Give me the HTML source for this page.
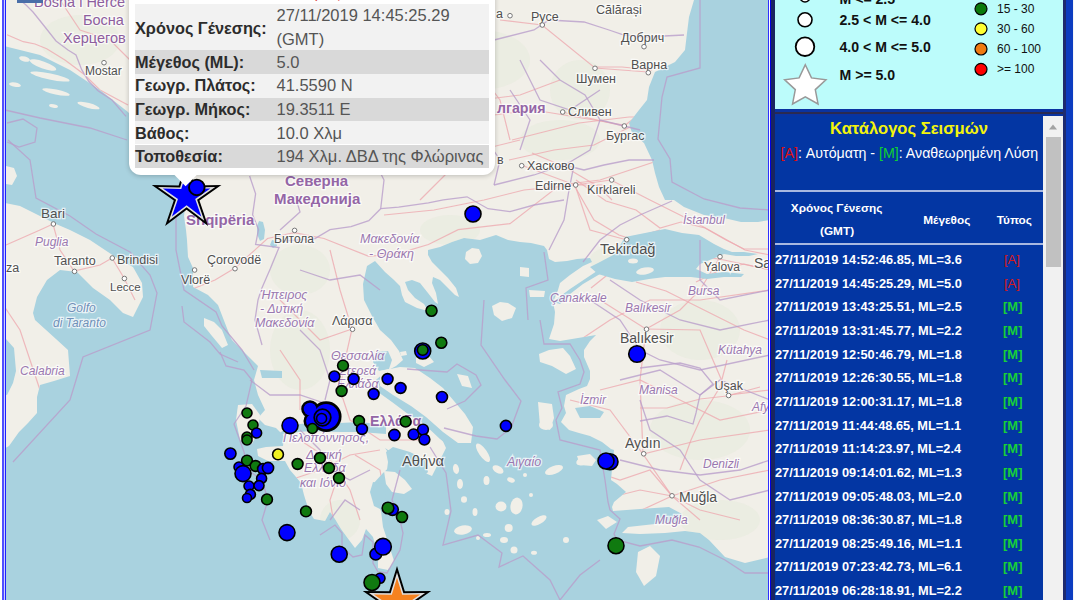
<!DOCTYPE html>
<html><head><meta charset="utf-8">
<style>
html,body{margin:0;padding:0;width:1074px;height:600px;overflow:hidden;background:#fff;font-family:"Liberation Sans",sans-serif;}
.abs{position:absolute;}
.pl{left:135px;font-weight:bold;font-size:16.3px;color:#2c2c2c;white-space:nowrap;line-height:20px}
.pv{left:276.5px;font-size:16.5px;color:#555;white-space:nowrap;line-height:20px}
.lg{font-weight:bold;font-size:14.1px;color:#111;white-space:nowrap;line-height:16px}
.lr{font-size:12px;color:#111;white-space:nowrap;line-height:14px}
.th{font-weight:bold;font-size:11.8px;white-space:nowrap;line-height:14px}
.row{position:absolute;left:0;font-weight:bold;font-size:12.8px;white-space:nowrap;line-height:16px}
.ty{position:absolute;font-size:13px;white-space:nowrap;line-height:16px}
#map{position:absolute;left:0;top:0;width:770px;height:600px;overflow:hidden;}
</style></head><body>
<div id="map">
<svg width="770" height="600" viewBox="0 0 770 600" style="position:absolute;left:0;top:0">
<defs><clipPath id="landclip"><path d="M0,0 L694,0 L689,17 L687,33 L685,50 L675,62 L655,72 L649,87 L647,100 L639,110 L629,123 L632,133 L644,143 L652,160 L655,173 L659,187 L665,200 L674,200 L684,207 L704,215 L724,218 L741,222 L758,222 L770,220 L770,557 L745,563 L725,557 L709,540 L700,533 L685,531 L665,533 L640,534 L622,533 L628,527 L655,524 L678,522 L682,514 L669,507 L640,509 L613,511 L612,507 L614,502 L626,492 L617,484 L611,480 L612,469 L614,450 L611,449 L602,442 L590,436 L579,433 L569,430 L561,422 L566,413 L564,406 L566,395 L579,389 L587,386 L590,379 L590,371 L584,357 L584,350 L590,341 L596,335 L578,338 L560,341 L549,339 L551,333 L554,324 L555,312 L553,302 L558,290 L560,283 L570,275 L583,266 L592,262 L590,258 L577,259 L567,261 L555,262 L549,259 L547,250 L544,246 L531,243 L520,242 L508,240 L496,235 L480,240 L464,238 L452,242 L440,247 L428,250 L428,255 L432,262 L440,270 L448,278 L456,288 L459,297 L455,295 L448,288 L440,280 L433,277 L432,283 L436,293 L438,304 L435,302 L428,293 L420,283 L412,280 L405,282 L408,290 L415,298 L424,304 L428,311 L417,308 L405,302 L402,295 L400,286 L394,280 L385,272 L375,261 L367,266 L363,284 L364,300 L372,316 L380,330 L391,340 L399,351 L403,360 L396,366 L385,372 L376,380 L382,390 L392,399 L408,410 L424,420 L440,435 L446,448 L440,460 L432,476 L418,470 L400,458 L385,448 L395,462 L383,473 L373,484 L375,497 L381,511 L383,527 L389,545 L394,561 L389,569 L383,564 L377,551 L373,537 L366,529 L362,540 L355,548 L349,540 L341,529 L335,519 L330,512 L325,521 L314,519 L309,511 L304,495 L301,483 L296,477 L290,470 L285,461 L280,461 L268,461 L258,456 L257,449 L266,447 L283,446 L284,436 L276,428 L265,425 L258,418 L265,410 L258,395 L254,380 L258,366 L244,352 L232,340 L230,336 L223,318 L218,305 L208,295 L193,287 L193,268 L188,257 L187,240 L186,230 L184,216 L186,200 L188,178 L175,165 L150,140 L128,112 L100,90 L70,70 L40,55 L0,45 Z"/><path d="M0,202 L20,206 L40,216 L56,224 L70,230 L90,240 L108,252 L120,260 L133,267 L142,283 L143,297 L133,317 L123,313 L110,300 L93,288 L77,272 L60,270 L47,280 L37,297 L33,313 L35,320 L56,339 L68,350 L70,376 L54,381 L40,385 L37,397 L37,413 L28,423 L19,432 L9,446 L0,451 L0,394 L7,395 L13,383 L16,371 L14,348 L6,339 L0,338 Z"/></clipPath></defs><rect x="0" y="0" width="770" height="600" fill="#a9d2df"/><path d="M0,0 L694,0 L689,17 L687,33 L685,50 L675,62 L655,72 L649,87 L647,100 L639,110 L629,123 L632,133 L644,143 L652,160 L655,173 L659,187 L665,200 L674,200 L684,207 L704,215 L724,218 L741,222 L758,222 L770,220 L770,557 L745,563 L725,557 L709,540 L700,533 L685,531 L665,533 L640,534 L622,533 L628,527 L655,524 L678,522 L682,514 L669,507 L640,509 L613,511 L612,507 L614,502 L626,492 L617,484 L611,480 L612,469 L614,450 L611,449 L602,442 L590,436 L579,433 L569,430 L561,422 L566,413 L564,406 L566,395 L579,389 L587,386 L590,379 L590,371 L584,357 L584,350 L590,341 L596,335 L578,338 L560,341 L549,339 L551,333 L554,324 L555,312 L553,302 L558,290 L560,283 L570,275 L583,266 L592,262 L590,258 L577,259 L567,261 L555,262 L549,259 L547,250 L544,246 L531,243 L520,242 L508,240 L496,235 L480,240 L464,238 L452,242 L440,247 L428,250 L428,255 L432,262 L440,270 L448,278 L456,288 L459,297 L455,295 L448,288 L440,280 L433,277 L432,283 L436,293 L438,304 L435,302 L428,293 L420,283 L412,280 L405,282 L408,290 L415,298 L424,304 L428,311 L417,308 L405,302 L402,295 L400,286 L394,280 L385,272 L375,261 L367,266 L363,284 L364,300 L372,316 L380,330 L391,340 L399,351 L403,360 L396,366 L385,372 L376,380 L382,390 L392,399 L408,410 L424,420 L440,435 L446,448 L440,460 L432,476 L418,470 L400,458 L385,448 L395,462 L383,473 L373,484 L375,497 L381,511 L383,527 L389,545 L394,561 L389,569 L383,564 L377,551 L373,537 L366,529 L362,540 L355,548 L349,540 L341,529 L335,519 L330,512 L325,521 L314,519 L309,511 L304,495 L301,483 L296,477 L290,470 L285,461 L280,461 L268,461 L258,456 L257,449 L266,447 L283,446 L284,436 L276,428 L265,425 L258,418 L265,410 L258,395 L254,380 L258,366 L244,352 L232,340 L230,336 L223,318 L218,305 L208,295 L193,287 L193,268 L188,257 L187,240 L186,230 L184,216 L186,200 L188,178 L175,165 L150,140 L128,112 L100,90 L70,70 L40,55 L0,45 Z" fill="#f1efe8" /><path d="M0,202 L20,206 L40,216 L56,224 L70,230 L90,240 L108,252 L120,260 L133,267 L142,283 L143,297 L133,317 L123,313 L110,300 L93,288 L77,272 L60,270 L47,280 L37,297 L33,313 L35,320 L56,339 L68,350 L70,376 L54,381 L40,385 L37,397 L37,413 L28,423 L19,432 L9,446 L0,451 L0,394 L7,395 L13,383 L16,371 L14,348 L6,339 L0,338 Z" fill="#f1efe8" /><g clip-path="url(#landclip)"><ellipse cx="80" cy="40" rx="40" ry="25" fill="#dde9cf" opacity="0.25"/><ellipse cx="230" cy="100" rx="30" ry="20" fill="#dde9cf" opacity="0.25"/><ellipse cx="330" cy="120" rx="40" ry="25" fill="#dde9cf" opacity="0.25"/><ellipse cx="480" cy="60" rx="50" ry="30" fill="#dde9cf" opacity="0.25"/><ellipse cx="560" cy="140" rx="40" ry="20" fill="#dde9cf" opacity="0.25"/><ellipse cx="700" cy="330" rx="40" ry="30" fill="#dde9cf" opacity="0.25"/><ellipse cx="700" cy="430" rx="50" ry="30" fill="#dde9cf" opacity="0.25"/><ellipse cx="620" cy="260" rx="30" ry="15" fill="#dde9cf" opacity="0.25"/><ellipse cx="300" cy="350" rx="30" ry="40" fill="#dde9cf" opacity="0.25"/><ellipse cx="340" cy="520" rx="20" ry="20" fill="#dde9cf" opacity="0.25"/><ellipse cx="450" cy="230" rx="30" ry="15" fill="#dde9cf" opacity="0.25"/><ellipse cx="720" cy="520" rx="40" ry="20" fill="#dde9cf" opacity="0.25"/><ellipse cx="300" cy="270" rx="30" ry="25" fill="#dde9cf" opacity="0.25"/><ellipse cx="580" cy="90" rx="30" ry="30" fill="#dde9cf" opacity="0.25"/><path d="M0,150 L40,175 L60,180 L90,200 L130,215" fill="none" stroke="#eeaab0" stroke-width="1.2" stroke-opacity="0.8"/><path d="M7,34.7 L23.3,41.7 L35,44 L46.7,48.7 L65.3,60.3 L84,74.3 L100,90 L128,105" fill="none" stroke="#eeaab0" stroke-width="1.2" stroke-opacity="0.8"/><path d="M6,245 L40,230 L53,224 L60,250 L74,271 L100,265 L112,258 L124,278 L135,300" fill="none" stroke="#eeaab0" stroke-width="1.2" stroke-opacity="0.8"/><path d="M190,290 L215,280 L235,268 L267.5,238.5 L294.3,232.6 L324,238.5 L368.8,256.4 L398.6,253.4 L428.4,244.5 L458.2,229.6 L510,223.6 L560,185 L600,180 L630,170 L660,160" fill="none" stroke="#eeaab0" stroke-width="1.2" stroke-opacity="0.8"/><path d="M330,250 L340,290 L352,329 L345,360 L340,390 L350,420 L380,440 L420,440" fill="none" stroke="#eeaab0" stroke-width="1.2" stroke-opacity="0.8"/><path d="M280,300 L300,320 L320,340 L352,329" fill="none" stroke="#eeaab0" stroke-width="1.2" stroke-opacity="0.8"/><path d="M300,440 L330,460 L350,490 L360,520" fill="none" stroke="#eeaab0" stroke-width="1.2" stroke-opacity="0.8"/><path d="M290,480 L320,470 L350,455 L380,450" fill="none" stroke="#eeaab0" stroke-width="1.2" stroke-opacity="0.8"/><path d="M500,20 L542,25 L595,68 L648,72" fill="none" stroke="#eeaab0" stroke-width="1.2" stroke-opacity="0.8"/><path d="M494,115 L534,110 L564,115 L624,125" fill="none" stroke="#eeaab0" stroke-width="1.2" stroke-opacity="0.8"/><path d="M509,160 L554,150 L594,145 L634,125" fill="none" stroke="#eeaab0" stroke-width="1.2" stroke-opacity="0.8"/><path d="M562,112 L624,126 L645,110" fill="none" stroke="#eeaab0" stroke-width="1.2" stroke-opacity="0.8"/><path d="M384,215 L434,210 L484,200 L524,190 L574,185 L604,185" fill="none" stroke="#eeaab0" stroke-width="1.2" stroke-opacity="0.8"/><path d="M521,165 L575,185 L611,180 L650,200 L700,225 L745,250 L770,255" fill="none" stroke="#eeaab0" stroke-width="1.2" stroke-opacity="0.8"/><path d="M574,185 L594,220 L619,235 L664,250 L724,260 L770,270" fill="none" stroke="#eeaab0" stroke-width="1.2" stroke-opacity="0.8"/><path d="M575,185 L590,230 L627,240 L660,230" fill="none" stroke="#eeaab0" stroke-width="1.2" stroke-opacity="0.8"/><path d="M600,300 L646,329 L640,380 L643,454 L672,496 L700,520" fill="none" stroke="#eeaab0" stroke-width="1.2" stroke-opacity="0.8"/><path d="M646,329 L700,330 L728,395 L770,390" fill="none" stroke="#eeaab0" stroke-width="1.2" stroke-opacity="0.8"/><path d="M720,257 L700,290 L680,310 L646,329" fill="none" stroke="#eeaab0" stroke-width="1.2" stroke-opacity="0.8"/><path d="M570,400 L610,410 L643,454 L700,440 L770,430" fill="none" stroke="#eeaab0" stroke-width="1.2" stroke-opacity="0.8"/><path d="M620,520 L672,496 L720,480 L770,470" fill="none" stroke="#eeaab0" stroke-width="1.2" stroke-opacity="0.8"/><path d="M580,340 L610,320 L650,300 L700,300 L770,290" fill="none" stroke="#eeaab0" stroke-width="1.2" stroke-opacity="0.8"/><path d="M600,390 L640,380 L680,400 L720,420 L770,410" fill="none" stroke="#eeaab0" stroke-width="1.2" stroke-opacity="0.8"/><path d="M440,0 L470,60 L500,100 L510,140" fill="none" stroke="#eeaab0" stroke-width="1.2" stroke-opacity="0.8"/><path d="M300,0 L320,60 L300,120" fill="none" stroke="#eeaab0" stroke-width="1.2" stroke-opacity="0.8"/><path d="M60,0 L80,30 L110,40 L130,60" fill="none" stroke="#eeaab0" stroke-width="1.2" stroke-opacity="0.8"/><path d="M0,300 L20,330 L30,360 L40,390" fill="none" stroke="#eeaab0" stroke-width="1.2" stroke-opacity="0.8"/><path d="M512,140 L579,123 L629,117 L655,117" fill="none" stroke="#eeaab0" stroke-width="1.2" stroke-opacity="0.8"/><path d="M595,67 L622,67 L652,70" fill="none" stroke="#eeaab0" stroke-width="1.2" stroke-opacity="0.8"/><path d="M532,153 L565,167 L599,187 L612,200" fill="none" stroke="#eeaab0" stroke-width="1.2" stroke-opacity="0.8"/><path d="M576,180 L606,201 L636,210 L660,228 L681,222 L705,228 L726,240 L744,249 L770,249" fill="none" stroke="#eeaab0" stroke-width="1.2" stroke-opacity="0.8"/><path d="M627,237 L621,255 L606,276 L591,288" fill="none" stroke="#eeaab0" stroke-width="1.2" stroke-opacity="0.8"/><path d="M696,282 L720,270 L744,264 L770,270" fill="none" stroke="#eeaab0" stroke-width="1.2" stroke-opacity="0.8"/><path d="M636,282 L666,291 L696,306 L720,318 L744,330 L770,340" fill="none" stroke="#eeaab0" stroke-width="1.2" stroke-opacity="0.8"/><path d="M640,408 L667,408 L700,399 L727,396 L760,387" fill="none" stroke="#eeaab0" stroke-width="1.2" stroke-opacity="0.8"/><path d="M727,360 L720,387 L700,420 L691,440 L680,470" fill="none" stroke="#eeaab0" stroke-width="1.2" stroke-opacity="0.8"/><path d="M560,440 L590,470 L620,480 L650,470 L672,496" fill="none" stroke="#eeaab0" stroke-width="1.2" stroke-opacity="0.8"/><path d="M600,500 L640,490 L672,496 L700,510 L740,520" fill="none" stroke="#eeaab0" stroke-width="1.2" stroke-opacity="0.8"/><path d="M420,200 L450,170 L480,150 L520,140" fill="none" stroke="#eeaab0" stroke-width="1.2" stroke-opacity="0.8"/><path d="M440,120 L480,100 L520,95 L560,80" fill="none" stroke="#eeaab0" stroke-width="1.2" stroke-opacity="0.8"/><path d="M280,350 L300,380 L300,410" fill="none" stroke="#eeaab0" stroke-width="1.2" stroke-opacity="0.8"/><path d="M340,470 L330,500 L335,530" fill="none" stroke="#eeaab0" stroke-width="1.2" stroke-opacity="0.8"/><path d="M355,455 L380,470 L385,500" fill="none" stroke="#eeaab0" stroke-width="1.2" stroke-opacity="0.8"/></g><path d="M290,425 L310,423 L322,424 L340,423 L360,422 L386,425 L386,434 L360,432 L340,432 L310,431 L290,433 L276,436 Z" fill="#a9d2df" /><path d="M260,370 L282,371 L282,378 L262,378 Z" fill="#a9d2df" /><path d="M259,221 L263,222 L265,230 L264,239 L260,241 L257,234 L257,226 Z" fill="#a9d2df" /><path d="M272,240 L276,241 L277,246 L273,248 L270,245 Z" fill="#a9d2df" /><path d="M553,302 L558,298 L570,289 L585,279 L597,271 L600,274 L583,284 L570,294 L560,304 Z" fill="#a9d2df" /><path d="M590,267 L600,262 L615,254 L625,237 L640,234 L655,231 L665,229 L682,233 L699,235 L714,244 L724,249 L732,252 L744,252 L758,254 L749,256 L736,256 L724,254 L717,257 L700,264 L696,269 L707,274 L724,272 L744,274 L741,277 L724,277 L707,279 L691,277 L665,277 L649,279 L632,282 L615,279 L598,274 Z" fill="#a9d2df" /><path d="M393,447 L410,452 L425,460 L428,472 L420,480 L410,496 L398,498 L388,492 L386,478 L388,462 L386,452 Z" fill="#a9d2df" /><path d="M373,482 L384,484 L386,495 L382,510 L374,506 L370,492 Z" fill="#a9d2df" /><path d="M377,352 L388,351 L392,360 L389,369 L379,371 L373,362 Z" fill="#a9d2df" /><path d="M382,376 L393,385 L408,396 L425,408 L443,422 L458,437 L466,446 L454,450 L440,439 L424,424 L408,414 L392,402 L378,392 Z" fill="#a9d2df" /><path d="M575,408 L590,406 L604,412 L600,418 L580,418 Z" fill="#a9d2df" /><path d="M6,166 L14,168 L17,176 L12,185 L6,184 Z" fill="#f1efe8" /><path d="M204,318 L214,322 L222,330 L228,345 L222,348 L212,336 L204,326 Z" fill="#f1efe8" /><path d="M238,405 L252,404 L260,415 L258,432 L252,444 L240,440 L236,420 Z" fill="#f1efe8" /><path d="M380,371 L400,367 L415,368 L430,378 L443,388 L454,401 L465,414 L473,427 L471,443 L458,443 L443,432 L426,417 L411,406 L393,395 L380,386 Z" fill="#f1efe8" /><path d="M539,354 L549,350 L563,348 L570,356 L576,369 L566,374 L552,366 L540,362 Z" fill="#f1efe8" /><path d="M538,402 L552,404 L554,418 L550,430 L540,426 Z" fill="#f1efe8" /><path d="M577,456 L590,454 L596,460 L592,466 L580,465 Z" fill="#f1efe8" /><path d="M597,520 L608,516 L617,522 L606,529 Z" fill="#f1efe8" /><path d="M638,552 L650,546 L660,556 L656,576 L644,586 L636,572 Z" fill="#f1efe8" /><path d="M492,306 L500,302 L508,303 L516,308 L512,318 L502,321 L494,315 Z" fill="#f1efe8" /><path d="M520,267 L529,268 L529,277 L520,276 Z" fill="#f1efe8" /><path d="M529,290 L545,291 L544,297 L530,297 Z" fill="#f1efe8" /><path d="M466,252 L472,248 L479,249 L482,256 L478,263 L470,264 L465,259 Z" fill="#f1efe8" /><path d="M457,374 L468,376 L472,388 L462,386 Z" fill="#f1efe8" /><path d="M416,356 L428,355 L434,362 L424,367 L416,363 Z" fill="#f1efe8" /><path d="M400,352 L406,351 L407,355 L401,356 Z" fill="#f1efe8" /><path d="M378,557 L390,560 L388,570 L378,568 Z" fill="#f1efe8" /><path d="M384,471 L395,472 L405,480 L412,489 L404,494 L392,492 L386,484 Z" fill="#f1efe8" /><path d="M396,480 L402,482 L402,487 L396,486 Z" fill="#f1efe8" /><ellipse cx="645" cy="271" rx="9" ry="3.5" transform="rotate(-10 645 271)" fill="#f1efe8"/><ellipse cx="633" cy="261" rx="5" ry="2.5" transform="rotate(0 633 261)" fill="#f1efe8"/><ellipse cx="43" cy="65" rx="14" ry="3.5" transform="rotate(20 43 65)" fill="#f1efe8"/><ellipse cx="50" cy="76.5" rx="20" ry="3" transform="rotate(12 50 76.5)" fill="#f1efe8"/><ellipse cx="15" cy="84.7" rx="6" ry="2.2" transform="rotate(10 15 84.7)" fill="#f1efe8"/><ellipse cx="56" cy="92" rx="14" ry="2.5" transform="rotate(12 56 92)" fill="#f1efe8"/><ellipse cx="53.5" cy="106" rx="4.5" ry="1.8" transform="rotate(10 53.5 106)" fill="#f1efe8"/><ellipse cx="88.5" cy="105.5" rx="11.5" ry="2.5" transform="rotate(15 88.5 105.5)" fill="#f1efe8"/><ellipse cx="24.5" cy="59" rx="5.5" ry="2.5" transform="rotate(15 24.5 59)" fill="#f1efe8"/><ellipse cx="483" cy="452.7" rx="4" ry="11" transform="rotate(-35 483 452.7)" fill="#f1efe8"/><ellipse cx="498" cy="469.5" rx="6" ry="3.5" transform="rotate(30 498 469.5)" fill="#f1efe8"/><ellipse cx="511" cy="480" rx="4" ry="2.5" transform="rotate(20 511 480)" fill="#f1efe8"/><ellipse cx="456" cy="469" rx="3" ry="5" transform="rotate(-10 456 469)" fill="#f1efe8"/><ellipse cx="486.5" cy="480.5" rx="3" ry="4.5" transform="rotate(0 486.5 480.5)" fill="#f1efe8"/><ellipse cx="460" cy="484" rx="3" ry="5" transform="rotate(0 460 484)" fill="#f1efe8"/><ellipse cx="464" cy="499.5" rx="3" ry="3.2" transform="rotate(0 464 499.5)" fill="#f1efe8"/><ellipse cx="501" cy="506.5" rx="5.5" ry="5" transform="rotate(0 501 506.5)" fill="#f1efe8"/><ellipse cx="516.5" cy="506" rx="6" ry="8.5" transform="rotate(10 516.5 506)" fill="#f1efe8"/><ellipse cx="475" cy="512" rx="2.5" ry="4" transform="rotate(0 475 512)" fill="#f1efe8"/><ellipse cx="463" cy="530" rx="9" ry="4.5" transform="rotate(-10 463 530)" fill="#f1efe8"/><ellipse cx="508.7" cy="528" rx="4" ry="4" transform="rotate(0 508.7 528)" fill="#f1efe8"/><ellipse cx="539" cy="520.5" rx="8.5" ry="3.5" transform="rotate(-30 539 520.5)" fill="#f1efe8"/><ellipse cx="514" cy="550" rx="3.5" ry="3.5" transform="rotate(0 514 550)" fill="#f1efe8"/><ellipse cx="554" cy="470" rx="9.5" ry="4" transform="rotate(-20 554 470)" fill="#f1efe8"/><ellipse cx="583" cy="461" rx="7" ry="4" transform="rotate(-20 583 461)" fill="#f1efe8"/><ellipse cx="566" cy="540" rx="3" ry="3" transform="rotate(0 566 540)" fill="#f1efe8"/><ellipse cx="534" cy="552.7" rx="3" ry="2" transform="rotate(0 534 552.7)" fill="#f1efe8"/><ellipse cx="504" cy="540" rx="4" ry="3" transform="rotate(0 504 540)" fill="#f1efe8"/><ellipse cx="487" cy="535" rx="4" ry="2" transform="rotate(0 487 535)" fill="#f1efe8"/><ellipse cx="546" cy="425" rx="7" ry="5" transform="rotate(0 546 425)" fill="#f1efe8"/><ellipse cx="447" cy="512" rx="2.5" ry="3" transform="rotate(0 447 512)" fill="#f1efe8"/><ellipse cx="478" cy="538" rx="2" ry="2" transform="rotate(0 478 538)" fill="#f1efe8"/><ellipse cx="531" cy="495" rx="2" ry="2" transform="rotate(0 531 495)" fill="#f1efe8"/><ellipse cx="525" cy="475" rx="2" ry="2" transform="rotate(0 525 475)" fill="#f1efe8"/>
<path d="M8,140 L30,160 L36,198 L70,216 L96,234 L130,252 L150,275 L157,293 L150,330 L83,357 L70,400 L13,462" fill="none" stroke="#b99ecb" stroke-width="1.3" stroke-opacity="0.8"/><path d="M5,110 L40,118 L90,128 L127,140" fill="none" stroke="#b99ecb" stroke-width="1.3" stroke-opacity="0.8"/><path d="M176,200 L176,250 L184,290 L216,312 L222,326 L242,350 L254,370" fill="none" stroke="#b99ecb" stroke-width="1.3" stroke-opacity="0.8"/><path d="M182,306 L184,322 L210,342 L220,354 L238,362" fill="none" stroke="#b99ecb" stroke-width="1.3" stroke-opacity="0.8"/><path d="M220,352 L226,366 L244,370 L252,380 L246,406 L234,424 L244,452 L248,470 L262,480 L268,500 L262,520 L270,540" fill="none" stroke="#b99ecb" stroke-width="1.3" stroke-opacity="0.8"/><path d="M320,535 L335,525 L342,533 L342,547 L353,557 L362,555 L365,535 L373,542 L373,563 L378,572 L387,573 L400,550 L403,533 L400,520 L392,500 L400,470" fill="none" stroke="#b99ecb" stroke-width="1.3" stroke-opacity="0.8"/><path d="M484,300 L481,345 L505,380 L521,401 L511,428 L497,439 L476,436 L444,428" fill="none" stroke="#b99ecb" stroke-width="1.3" stroke-opacity="0.8"/><path d="M407,369 L447,372 L457,364 L476,375 L481,385 L465,401 L447,409" fill="none" stroke="#b99ecb" stroke-width="1.3" stroke-opacity="0.8"/><path d="M540,320 L544,344 L570,344 L580,360 L584,372 L580,384 L558,392 L562,408 L556,420 L560,440 L600,450 L605,480 L608,502 L610,510 L620,519 L614,534 L617,540 L640,546 L672,540 L699,547 L725,560 L745,573 L770,573" fill="none" stroke="#b99ecb" stroke-width="1.3" stroke-opacity="0.8"/><path d="M544,252 L548,280 L526,288 L528,320" fill="none" stroke="#b99ecb" stroke-width="1.3" stroke-opacity="0.8"/><path d="M700,0 L700,68 L667,77 L662,97 L658,139 L670,159 L672,182 L704,199 L740,208 L770,210" fill="none" stroke="#b99ecb" stroke-width="1.3" stroke-opacity="0.8"/><path d="M430,447 L446,473 L451,511 L443,545 L478,535 L502,553 L499,567 L523,556 L550,580 L560,600" fill="none" stroke="#b99ecb" stroke-width="1.3" stroke-opacity="0.8"/><path d="M600,560 L580,575 L560,600" fill="none" stroke="#b99ecb" stroke-width="1.3" stroke-opacity="0.8"/><path d="M20,0 L26,5 L33,12 L45,27 L56,41 L68,50 L76,55 L81.7,69.7 L88.7,81.3 L98,90.7 L112,100 L126,116.3" fill="none" stroke="#b99ecb" stroke-width="1.3" stroke-opacity="0.8"/><path d="M7,123 L23,119 L37,128 L35,142 L19,147 L7,142" fill="none" stroke="#b99ecb" stroke-width="1.3" stroke-opacity="0.8"/><path d="M249.6,176 L255.6,193.8 L252.6,214.7 L258.5,229.6 L255.6,244.5 L279,247.5 L270.5,268.3 L261.5,289 L258,300 L255,320 L262,345" fill="none" stroke="#b99ecb" stroke-width="1.3" stroke-opacity="0.8"/><path d="M279,241.5 L315,238.5 L330,229.6 L351,226.6 L368.8,220.7 L380.7,208.7 L398.6,207.2 L428.4,202.8 L443.3,199.8 L467,196.8 L488,208.7 L510,211.7 L534,205 L564,200" fill="none" stroke="#b99ecb" stroke-width="1.3" stroke-opacity="0.8"/><path d="M380.7,208.7 L384,180 L380,172" fill="none" stroke="#b99ecb" stroke-width="1.3" stroke-opacity="0.8"/><path d="M494,40 L534,30 L549,20 L584,22 L609,30 L624,35 L644,37 L684,35" fill="none" stroke="#b99ecb" stroke-width="1.3" stroke-opacity="0.8"/><path d="M494,185 L534,175 L564,165 L584,170 L604,165 L629,160 L654,160" fill="none" stroke="#b99ecb" stroke-width="1.3" stroke-opacity="0.8"/><path d="M574,165 L569,190 L564,220 L549,250" fill="none" stroke="#b99ecb" stroke-width="1.3" stroke-opacity="0.8"/><path d="M540,60 L560,80 L585,95 L600,120 L640,130" fill="none" stroke="#b99ecb" stroke-width="1.3" stroke-opacity="0.8"/><path d="M510,90 L530,120 L520,150" fill="none" stroke="#b99ecb" stroke-width="1.3" stroke-opacity="0.8"/><path d="M600,120 L590,150 L565,165" fill="none" stroke="#b99ecb" stroke-width="1.3" stroke-opacity="0.8"/><path d="M583,262 L600,240 L620,225 L640,215 L672,201" fill="none" stroke="#b99ecb" stroke-width="1.3" stroke-opacity="0.8"/><path d="M280,230 L300,212 L295,195" fill="none" stroke="#b99ecb" stroke-width="1.3" stroke-opacity="0.8"/><path d="M300,270 L330,280 L360,275 L380,290" fill="none" stroke="#b99ecb" stroke-width="1.3" stroke-opacity="0.8"/><path d="M300,330 L320,350 L330,380 L325,400" fill="none" stroke="#b99ecb" stroke-width="1.3" stroke-opacity="0.8"/><path d="M250,380 L270,395 L300,395 L330,405" fill="none" stroke="#b99ecb" stroke-width="1.3" stroke-opacity="0.8"/><path d="M590,300 L620,320 L640,350 L660,360 L700,370 L770,355" fill="none" stroke="#b99ecb" stroke-width="1.3" stroke-opacity="0.8"/><path d="M610,280 L640,300 L680,320 L720,330 L770,320" fill="none" stroke="#b99ecb" stroke-width="1.3" stroke-opacity="0.8"/><path d="M620,380 L660,370 L700,395 L720,380 L770,400" fill="none" stroke="#b99ecb" stroke-width="1.3" stroke-opacity="0.8"/><path d="M620,460 L660,470 L700,475 L740,470 L770,460" fill="none" stroke="#b99ecb" stroke-width="1.3" stroke-opacity="0.8"/><path d="M640,400 L650,430 L680,450 L700,480 L730,500 L770,490" fill="none" stroke="#b99ecb" stroke-width="1.3" stroke-opacity="0.8"/><path d="M700,240 L700,280 L720,300 L770,290" fill="none" stroke="#b99ecb" stroke-width="1.3" stroke-opacity="0.8"/><path d="M640,368 L680,363 L700,368 L713,384 L700,395 L696,413 L693,424 L667,416 L640,421" fill="none" stroke="#b99ecb" stroke-width="1.3" stroke-opacity="0.8"/><path d="M520,60 L540,100 L570,110 L600,90" fill="none" stroke="#b99ecb" stroke-width="1.3" stroke-opacity="0.8"/><path d="M450,100 L480,130 L500,160 L494,185" fill="none" stroke="#b99ecb" stroke-width="1.3" stroke-opacity="0.8"/><path d="M440,40 L460,80 L450,100" fill="none" stroke="#b99ecb" stroke-width="1.3" stroke-opacity="0.8"/><path d="M300,430 L320,450 L330,470 L350,480 L370,470" fill="none" stroke="#b99ecb" stroke-width="1.3" stroke-opacity="0.8"/><path d="M330,520 L345,500 L360,510" fill="none" stroke="#b99ecb" stroke-width="1.3" stroke-opacity="0.8"/>
<g font-family="Liberation Sans, sans-serif" stroke="#fff" stroke-width="2.5" stroke-opacity="0.7" paint-order="stroke"><text x="34" y="7" font-size="14.5" fill="#8e5e9e">Bosna i Herce</text><text x="83" y="25" font-size="14.5" fill="#8e5e9e">Босна</text><text x="63" y="43" font-size="14.5" fill="#8e5e9e">Херцегов</text><text x="85" y="75" font-size="12" fill="#505050">Mostar</text><text x="41" y="218" font-size="13.5" fill="#505050">Bari</text><text x="35" y="246" font-size="12" fill="#9a78b0" font-style="italic">Puglia</text><text x="54" y="265" font-size="12.5" fill="#505050">Taranto</text><text x="117" y="263.5" font-size="12.5" fill="#505050">Brindisi</text><text x="110" y="291" font-size="11.5" fill="#505050">Lecce</text><text x="6" y="272" font-size="12.5" fill="#505050">za</text><text x="67" y="312" font-size="12" fill="#7090b8" font-style="italic">Golfo</text><text x="53" y="327" font-size="12" fill="#7090b8" font-style="italic">di Taranto</text><text x="20" y="375" font-size="12" fill="#9a78b0" font-style="italic">Calabria</text><text x="181" y="284" font-size="12.5" fill="#505050">Vlorë</text><text x="207" y="263.5" font-size="12.5" fill="#505050">Çorovodë</text><text x="186" y="225" font-size="15" fill="#9466a6" font-weight="bold">Shqipëria</text><text x="285" y="186" font-size="15" fill="#9466a6" font-weight="bold">Северна</text><text x="274" y="203.5" font-size="15" fill="#9466a6" font-weight="bold">Македонија</text><text x="274" y="243" font-size="12" fill="#505050">Битола</text><text x="360" y="243" font-size="12.5" fill="#9a78b0" font-style="italic">Μακεδονία</text><text x="369" y="258" font-size="12.5" fill="#9a78b0" font-style="italic">- Θράκη</text><text x="260" y="299" font-size="12.5" fill="#9a78b0" font-style="italic">Ήπειρος</text><text x="260" y="313" font-size="12.5" fill="#9a78b0" font-style="italic">- Δυτική</text><text x="255" y="326.5" font-size="12.5" fill="#9a78b0" font-style="italic">Μακεδονία</text><text x="332" y="324.5" font-size="12.5" fill="#505050">Λάρισα</text><text x="331" y="360" font-size="12.5" fill="#9a78b0" font-style="italic">Θεσσαλία</text><text x="339" y="374.5" font-size="12.5" fill="#9a78b0" font-style="italic">Στερεά</text><text x="337" y="388" font-size="12.5" fill="#9a78b0" font-style="italic">Ελλάδα</text><text x="370" y="425.5" font-size="14.2" fill="#9466a6" font-weight="bold">Ελλάδα</text><text x="283" y="442" font-size="12.5" fill="#9a78b0" font-style="italic">Πελοπόννησος,</text><text x="306" y="458.5" font-size="12.5" fill="#9a78b0" font-style="italic">Δυτική</text><text x="304" y="472" font-size="12.5" fill="#9a78b0" font-style="italic">Ελλάδα</text><text x="300" y="487" font-size="12.5" fill="#9a78b0" font-style="italic">και Ιόνιο</text><text x="402" y="465.5" font-size="14.7" fill="#505050">Αθήνα</text><text x="507" y="466" font-size="12.5" fill="#9a78b0" font-style="italic">Αιγαίο</text><text x="496" y="18" font-size="12.5" fill="#505050">a</text><text x="531" y="21" font-size="12.5" fill="#505050">Русе</text><text x="596" y="13.5" font-size="12.5" fill="#505050">Călărași</text><text x="621" y="42" font-size="12.5" fill="#505050">Добрич</text><text x="631" y="68.5" font-size="12.5" fill="#505050">Варна</text><text x="576" y="83" font-size="12.5" fill="#505050">Шумен</text><text x="497" y="113" font-size="14.2" fill="#9466a6" font-weight="bold">лгария</text><text x="568" y="116" font-size="12.5" fill="#505050">Сливен</text><text x="606" y="139.5" font-size="12.5" fill="#505050">Бургас</text><text x="497" y="163.5" font-size="12.5" fill="#505050">в</text><text x="527" y="170" font-size="12.5" fill="#505050">Хасково</text><text x="535" y="189.5" font-size="12.5" fill="#505050">Edirne</text><text x="587" y="193.5" font-size="12.5" fill="#505050">Kırklareli</text><text x="683" y="224" font-size="12" fill="#9a78b0" font-style="italic">İstanbul</text><text x="600" y="254" font-size="14.7" fill="#505050">Tekirdağ</text><text x="704" y="271" font-size="12" fill="#505050">Yalova</text><text x="754" y="268" font-size="14" fill="#505050">Sa</text><text x="688" y="295" font-size="12" fill="#9a78b0" font-style="italic">Bursa</text><text x="550" y="302" font-size="12" fill="#9a78b0" font-style="italic">Çanakkale</text><text x="625" y="311.5" font-size="12" fill="#9a78b0" font-style="italic">Balıkesir</text><text x="620" y="343" font-size="14" fill="#505050">Balıkesir</text><text x="718" y="354" font-size="12" fill="#9a78b0" font-style="italic">Kütahya</text><text x="639" y="394" font-size="12" fill="#9a78b0" font-style="italic">Manisa</text><text x="714.5" y="390" font-size="12.5" fill="#505050">Uşak</text><text x="580" y="404" font-size="12" fill="#9a78b0" font-style="italic">İzmir</text><text x="752" y="411" font-size="12" fill="#9a78b0" font-style="italic">Afy</text><text x="625" y="447.5" font-size="14" fill="#505050">Aydın</text><text x="703" y="467.5" font-size="12" fill="#9a78b0" font-style="italic">Denizli</text><text x="679" y="501.5" font-size="14" fill="#505050">Muğla</text><text x="655" y="524" font-size="12" fill="#9a78b0" font-style="italic">Muğla</text></g><circle cx="53.4" cy="224" r="2.3" fill="#fff" stroke="#777" stroke-width="1"/><circle cx="74.5" cy="271.4" r="2.3" fill="#fff" stroke="#777" stroke-width="1"/><circle cx="112.3" cy="258" r="2.3" fill="#fff" stroke="#777" stroke-width="1"/><circle cx="124.4" cy="278.5" r="2.3" fill="#fff" stroke="#777" stroke-width="1"/><circle cx="194.6" cy="270" r="2.3" fill="#fff" stroke="#777" stroke-width="1"/><circle cx="104" cy="62.7" r="2.3" fill="#fff" stroke="#777" stroke-width="1"/><circle cx="294.6" cy="230.4" r="2.3" fill="#fff" stroke="#777" stroke-width="1"/><circle cx="235" cy="268.7" r="2.3" fill="#fff" stroke="#777" stroke-width="1"/><circle cx="352.5" cy="329.3" r="2.3" fill="#fff" stroke="#777" stroke-width="1"/><circle cx="510" cy="15.7" r="2.3" fill="#fff" stroke="#777" stroke-width="1"/><circle cx="542.3" cy="25" r="2.3" fill="#fff" stroke="#777" stroke-width="1"/><circle cx="644" cy="46.7" r="2.3" fill="#fff" stroke="#777" stroke-width="1"/><circle cx="648.3" cy="72.7" r="2.3" fill="#fff" stroke="#777" stroke-width="1"/><circle cx="595" cy="68.3" r="2.3" fill="#fff" stroke="#777" stroke-width="1"/><circle cx="562.7" cy="112" r="2.3" fill="#fff" stroke="#777" stroke-width="1"/><circle cx="624.3" cy="126" r="2.3" fill="#fff" stroke="#777" stroke-width="1"/><circle cx="521.7" cy="165.7" r="2.3" fill="#fff" stroke="#777" stroke-width="1"/><circle cx="575.7" cy="185" r="2.3" fill="#fff" stroke="#777" stroke-width="1"/><circle cx="611.7" cy="180" r="2.3" fill="#fff" stroke="#777" stroke-width="1"/><circle cx="626.7" cy="239.7" r="2.3" fill="#fff" stroke="#777" stroke-width="1"/><circle cx="720" cy="256.7" r="2.3" fill="#fff" stroke="#777" stroke-width="1"/><circle cx="646.5" cy="329.2" r="2.3" fill="#fff" stroke="#777" stroke-width="1"/><circle cx="728.6" cy="395.5" r="2.3" fill="#fff" stroke="#777" stroke-width="1"/><circle cx="643.7" cy="453.8" r="2.3" fill="#fff" stroke="#777" stroke-width="1"/><circle cx="672" cy="495.8" r="2.3" fill="#fff" stroke="#777" stroke-width="1"/>
<circle cx="473" cy="214" r="8" fill="#0000ff" stroke="#000" stroke-width="1.6"/><circle cx="431.5" cy="310.7" r="5.5" fill="#107a10" stroke="#000" stroke-width="1.6"/><circle cx="422.7" cy="351" r="8" fill="#0000ff" stroke="#000" stroke-width="1.6"/><circle cx="422.7" cy="350" r="5.3" fill="#107a10" stroke="#000" stroke-width="1.6"/><circle cx="441.3" cy="342.7" r="5.5" fill="#107a10" stroke="#000" stroke-width="1.6"/><circle cx="343" cy="365.6" r="5.4" fill="#107a10" stroke="#000" stroke-width="1.6"/><circle cx="334.4" cy="376.4" r="5.4" fill="#0000ff" stroke="#000" stroke-width="1.6"/><circle cx="353.6" cy="379" r="5.4" fill="#0000ff" stroke="#000" stroke-width="1.6"/><circle cx="341.6" cy="391" r="5.4" fill="#107a10" stroke="#000" stroke-width="1.6"/><circle cx="387.6" cy="379" r="5.4" fill="#0000ff" stroke="#000" stroke-width="1.6"/><circle cx="400.6" cy="388" r="5.4" fill="#0000ff" stroke="#000" stroke-width="1.6"/><circle cx="373.6" cy="394" r="5.4" fill="#0000ff" stroke="#000" stroke-width="1.6"/><circle cx="442" cy="397" r="5.5" fill="#0000ff" stroke="#000" stroke-width="1.6"/><circle cx="505.9" cy="425.9" r="5.5" fill="#0000ff" stroke="#000" stroke-width="1.6"/><circle cx="359" cy="421" r="5.4" fill="#107a10" stroke="#000" stroke-width="1.6"/><circle cx="362" cy="429" r="5.4" fill="#0000ff" stroke="#000" stroke-width="1.6"/><circle cx="405.6" cy="421.6" r="5.4" fill="#107a10" stroke="#000" stroke-width="1.6"/><circle cx="394.4" cy="435" r="5.6" fill="#0000ff" stroke="#000" stroke-width="1.6"/><circle cx="413.6" cy="434.4" r="5.4" fill="#0000ff" stroke="#000" stroke-width="1.6"/><circle cx="423" cy="429.6" r="5.4" fill="#0000ff" stroke="#000" stroke-width="1.6"/><circle cx="424.4" cy="439.6" r="5.4" fill="#0000ff" stroke="#000" stroke-width="1.6"/><circle cx="290" cy="425.6" r="8" fill="#0000ff" stroke="#000" stroke-width="1.6"/><circle cx="247" cy="413" r="5" fill="#107a10" stroke="#000" stroke-width="1.6"/><circle cx="253" cy="425" r="5" fill="#107a10" stroke="#000" stroke-width="1.6"/><circle cx="256.6" cy="433" r="5" fill="#0000ff" stroke="#000" stroke-width="1.6"/><circle cx="247" cy="437" r="5" fill="#107a10" stroke="#000" stroke-width="1.6"/><circle cx="230.4" cy="453.6" r="5.6" fill="#0000ff" stroke="#000" stroke-width="1.6"/><circle cx="278" cy="454.4" r="5.4" fill="#f0f020" stroke="#000" stroke-width="1.6"/><circle cx="247" cy="440" r="5" fill="#107a10" stroke="#000" stroke-width="1.6"/><circle cx="247" cy="460.6" r="5.4" fill="#107a10" stroke="#000" stroke-width="1.6"/><circle cx="255.6" cy="466" r="5.4" fill="#107a10" stroke="#000" stroke-width="1.6"/><circle cx="263" cy="469" r="5.4" fill="#0000ff" stroke="#000" stroke-width="1.6"/><circle cx="268" cy="468" r="5.6" fill="#0000ff" stroke="#000" stroke-width="1.6"/><circle cx="239" cy="467" r="5" fill="#0000ff" stroke="#000" stroke-width="1.6"/><circle cx="243" cy="473.6" r="8" fill="#0000ff" stroke="#000" stroke-width="1.6"/><circle cx="261.6" cy="478.4" r="5" fill="#0000ff" stroke="#000" stroke-width="1.6"/><circle cx="249" cy="486" r="5" fill="#0000ff" stroke="#000" stroke-width="1.6"/><circle cx="259" cy="485.6" r="5" fill="#0000ff" stroke="#000" stroke-width="1.6"/><circle cx="250.4" cy="494.4" r="5" fill="#0000ff" stroke="#000" stroke-width="1.6"/><circle cx="247" cy="498" r="4.5" fill="#0000ff" stroke="#000" stroke-width="1.6"/><circle cx="267" cy="499.4" r="5.4" fill="#107a10" stroke="#000" stroke-width="1.6"/><circle cx="297.6" cy="464" r="5.4" fill="#107a10" stroke="#000" stroke-width="1.6"/><circle cx="320" cy="458" r="5.4" fill="#107a10" stroke="#000" stroke-width="1.6"/><circle cx="329" cy="468" r="5.4" fill="#107a10" stroke="#000" stroke-width="1.6"/><circle cx="339" cy="478" r="5.4" fill="#107a10" stroke="#000" stroke-width="1.6"/><circle cx="306" cy="511.4" r="5.4" fill="#107a10" stroke="#000" stroke-width="1.6"/><circle cx="287" cy="532.6" r="8" fill="#0000ff" stroke="#000" stroke-width="1.6"/><circle cx="392.5" cy="509.6" r="5.8" fill="#0000ff" stroke="#000" stroke-width="1.6"/><circle cx="388" cy="508" r="5.8" fill="#107a10" stroke="#000" stroke-width="1.6"/><circle cx="402" cy="517" r="5.5" fill="#107a10" stroke="#000" stroke-width="1.6"/><circle cx="339.2" cy="554.2" r="8" fill="#0000ff" stroke="#000" stroke-width="1.6"/><circle cx="375.8" cy="554.2" r="5.8" fill="#0000ff" stroke="#000" stroke-width="1.6"/><circle cx="383" cy="546.7" r="8.3" fill="#0000ff" stroke="#000" stroke-width="1.6"/><circle cx="380" cy="578.3" r="5" fill="#0000ff" stroke="#000" stroke-width="1.6"/><circle cx="372" cy="582.5" r="8" fill="#107a10" stroke="#000" stroke-width="1.6"/><circle cx="637" cy="354" r="8.3" fill="#0000ff" stroke="#000" stroke-width="1.6"/><circle cx="610" cy="461.7" r="8" fill="#0000ff" stroke="#000" stroke-width="1.6"/><circle cx="606" cy="461" r="8" fill="#0000ff" stroke="#000" stroke-width="1.6"/><circle cx="616" cy="545.7" r="8" fill="#107a10" stroke="#000" stroke-width="1.6"/><circle cx="310" cy="409" r="6.3" fill="#000" stroke="#000" stroke-width="5"/><circle cx="313" cy="421" r="7" fill="#000" stroke="#000" stroke-width="5"/><circle cx="326.2" cy="416.6" r="12.6" fill="#000" stroke="#000" stroke-width="5.5"/><circle cx="310" cy="409" r="6.3" fill="#0000ff"/><circle cx="313" cy="421" r="7" fill="#0000ff"/><circle cx="326.2" cy="416.6" r="12.6" fill="#0000ff"/><circle cx="322.5" cy="417.5" r="8.3" fill="none" stroke="#000" stroke-width="1.8"/><circle cx="321.6" cy="418.4" r="5" fill="#0000ff" stroke="#000" stroke-width="1.5"/><circle cx="312.4" cy="428.5" r="5" fill="#107a10" stroke="#000" stroke-width="1.6"/>
<path d="M186.6,159.7 L194.54,185.38 L221.41,184.99 L199.44,200.47 L208.11,225.91 L186.6,209.8 L165.09,225.91 L173.76,200.47 L151.79,184.99 L178.66,185.38 Z" fill="#000"/><path d="M186.6,166.18 L193.08,187.38 L215.25,186.99 L197.09,199.71 L204.3,220.67 L186.6,207.33 L168.9,220.67 L176.11,199.71 L157.95,186.99 L180.12,187.38 Z" fill="#e0e0e0"/><path d="M186.6,171.36 L191.92,188.98 L210.32,188.59 L195.21,199.1 L201.26,216.47 L186.6,205.35 L171.94,216.47 L177.99,199.1 L162.88,188.59 L181.28,188.98 Z" fill="#0000ff"/><circle cx="196.8" cy="187.4" r="7.8" fill="#0000ff" stroke="#000" stroke-width="1.9"/><path d="M397.0,566.0 L404.82,591.24 L431.24,590.88 L409.65,606.11 L418.16,631.12 L397.0,615.3 L375.84,631.12 L384.35,606.11 L362.76,590.88 L389.18,591.24 Z" fill="#000"/><path d="M397.0,572.48 L403.36,593.24 L425.08,592.88 L407.3,605.35 L414.35,625.88 L397.0,612.83 L379.65,625.88 L386.7,605.35 L368.92,592.88 L390.64,593.24 Z" fill="#e0e0e0"/><path d="M397.0,577.66 L402.2,594.84 L420.14,594.48 L405.42,604.73 L411.3,621.69 L397.0,610.85 L382.7,621.69 L388.58,604.73 L373.86,594.48 L391.8,594.84 Z" fill="#f58220"/>
</svg>
</div>
<div class="abs" style="left:0;top:0;width:2px;height:600px;background:#fff"></div>
<div class="abs" style="left:2px;top:0;width:2px;height:600px;background:#5050ff"></div>
<div class="abs" style="left:4px;top:0;width:1px;height:600px;background:#d0d0ff"></div>
<div class="abs" style="left:5px;top:0;width:1px;height:600px;background:#2020ff"></div>
<div class="abs" style="left:17px;top:0;width:26px;height:3px;background:#4a6ea8"></div>


<!-- popup -->
<div class="abs" style="left:128.5px;top:-30px;width:366px;height:204.5px;background:#fff;border-radius:12px;box-shadow:0 1px 5px rgba(0,0,0,0.22)"></div>
<svg class="abs" style="left:168px;top:174px" width="40" height="16"><path d="M5.5,0 L29.7,0 L17.6,12.3 Z" fill="#fff"/></svg>
<div class="abs" style="left:284px;top:-16px;font-size:16px;color:#e05050;white-space:nowrap;line-height:18px">Σεισμός ML=5.0</div>
<div class="abs" style="left:135px;top:3.7px;width:353.5px;height:46.2px;background:#f2f2f2"></div>
<div class="abs" style="left:135px;top:49.9px;width:353.5px;height:23.7px;background:#d9d9d9"></div>
<div class="abs" style="left:135px;top:73.6px;width:353.5px;height:24.2px;background:#f2f2f2"></div>
<div class="abs" style="left:135px;top:97.8px;width:353.5px;height:23.4px;background:#d9d9d9"></div>
<div class="abs" style="left:135px;top:121.2px;width:353.5px;height:23.3px;background:#f2f2f2"></div>
<div class="abs" style="left:135px;top:144.5px;width:353.5px;height:23.2px;background:#d9d9d9"></div>
<div class="abs pl" style="top:17.5px">Χρόνος Γένεσης:</div>
<div class="abs pl" style="top:51.5px">Μέγεθος (ML):</div>
<div class="abs pl" style="top:75.3px">Γεωγρ. Πλάτος:</div>
<div class="abs pl" style="top:99.3px">Γεωγρ. Μήκος:</div>
<div class="abs pl" style="top:122.8px">Βάθος:</div>
<div class="abs pl" style="top:146.2px">Τοποθεσία:</div>
<div class="abs pv" style="top:4.5px">27/11/2019 14:45:25.29</div>
<div class="abs pv" style="top:28.8px">(GMT)</div>
<div class="abs pv" style="top:51.5px">5.0</div>
<div class="abs pv" style="top:75.3px">41.5590 N</div>
<div class="abs pv" style="top:99.3px">19.3511 E</div>
<div class="abs pv" style="top:122.8px">10.0 Χλμ</div>
<div class="abs pv" style="top:146.2px">194 Χλμ. ΔΒΔ της Φλώρινας</div>

<!-- sidebar -->
<div class="abs" style="left:768px;top:0;width:306px;height:600px;background:#0a33a0"></div>
<div class="abs" style="left:768px;top:0;width:1px;height:600px;background:#3030ff"></div>
<div class="abs" style="left:769px;top:0;width:1px;height:600px;background:#fff"></div>
<div class="abs" style="left:770px;top:0;width:1px;height:600px;background:#0000e0"></div>
<div class="abs" style="left:771px;top:0;width:4px;height:600px;background:#1a2560"></div>
<div class="abs" style="left:1063px;top:0;width:2.5px;height:600px;background:#1e2a70"></div><div class="abs" style="left:1065.5px;top:0;width:7px;height:600px;background:#0c3cc0"></div><div class="abs" style="left:1072.5px;top:0;width:1.5px;height:600px;background:#f4f4f8"></div>
<div class="abs" style="left:775px;top:112px;width:288px;height:2px;background:#2a2a50"></div>
<div class="abs" style="left:775px;top:0;width:288px;height:109px;background:#bcfcfb;overflow:hidden">
 <svg width="288" height="109" style="position:absolute;left:0;top:0">
  <circle cx="30" cy="-3" r="5" fill="#fff" stroke="#000" stroke-width="1.5"/>
  <circle cx="30" cy="19.8" r="7" fill="#fff" stroke="#000" stroke-width="1.6"/>
  <circle cx="30" cy="46.7" r="9.3" fill="#fff" stroke="#000" stroke-width="1.8"/>
  <path d="M30.3,64.7 L36.47,77.91 L50.94,79.69 L40.29,89.64 L43.05,103.96 L30.3,96.9 L17.55,103.96 L20.31,89.64 L9.66,79.69 L24.13,77.91 Z" fill="#fff" stroke="#999" stroke-width="1.5"/>
  <circle cx="206" cy="8.8" r="6" fill="#0a7a0a" stroke="#000" stroke-width="1.2"/>
  <circle cx="206" cy="28.8" r="6" fill="#ffff30" stroke="#000" stroke-width="1.2"/>
  <circle cx="206" cy="49" r="6" fill="#f07a10" stroke="#000" stroke-width="1.2"/>
  <circle cx="206" cy="69.3" r="6" fill="#ff0000" stroke="#000" stroke-width="1.2"/>
 </svg>
 <div class="abs lg" style="left:64.5px;top:-9px">M &lt;= 2.5</div>
 <div class="abs lg" style="left:64.5px;top:12px">2.5 &lt; M &lt;= 4.0</div>
 <div class="abs lg" style="left:64.5px;top:38.5px">4.0 &lt; M &lt;= 5.0</div>
 <div class="abs lg" style="left:64.5px;top:66.5px">M &gt;= 5.0</div>
 <div class="abs lr" style="left:222px;top:1.5px">15 - 30</div>
 <div class="abs lr" style="left:222px;top:21.5px">30 - 60</div>
 <div class="abs lr" style="left:222px;top:41.5px">60 - 100</div>
 <div class="abs lr" style="left:222px;top:61.5px">&gt;= 100</div>
</div>
<div class="abs" style="left:775px;top:116px;width:268px;height:484px;background:#0336a3;overflow:hidden;color:#fff">
 <div class="abs" style="left:0;top:3px;width:268px;text-align:center;font-weight:bold;font-size:16.6px;color:#f4f40c;line-height:20px">Κατάλογος Σεισμών</div>
 <div class="abs" style="left:5.6px;top:27.5px;white-space:nowrap;font-size:14.2px;line-height:18px"><span style="color:#e01010">[A]</span>: Αυτόματη - <span style="color:#10d030">[M]</span>: Αναθεωρημένη Λύση</div>
 <div class="abs" style="left:0;top:74px;width:268px;height:2px;background:#a8b8e0"></div>
 <div class="abs th" style="left:15.8px;top:85px">Χρόνος Γένεσης</div>
 <div class="abs th" style="left:45px;top:108px">(GMT)</div>
 <div class="abs th" style="left:148.3px;top:96.5px">Μέγεθος</div>
 <div class="abs th" style="left:221.7px;top:96.5px">Τύπος</div>
 <div class="abs" style="left:0;top:127px;width:268px;height:2px;background:#a8b8e0"></div>
 <div class="row" style="top:136.00px">27/11/2019 14:52:46.85, ML=3.6</div><div class="ty" style="left:229px;top:136.00px;color:#d81818">[A]</div><div class="row" style="top:159.65px">27/11/2019 14:45:25.29, ML=5.0</div><div class="ty" style="left:229px;top:159.65px;color:#d81818">[A]</div><div class="row" style="top:183.30px">27/11/2019 13:43:25.51, ML=2.5</div><div class="ty" style="left:228px;top:183.30px;color:#18d038;font-weight:bold">[M]</div><div class="row" style="top:206.95px">27/11/2019 13:31:45.77, ML=2.2</div><div class="ty" style="left:228px;top:206.95px;color:#18d038;font-weight:bold">[M]</div><div class="row" style="top:230.60px">27/11/2019 12:50:46.79, ML=1.8</div><div class="ty" style="left:228px;top:230.60px;color:#18d038;font-weight:bold">[M]</div><div class="row" style="top:254.25px">27/11/2019 12:26:30.55, ML=1.8</div><div class="ty" style="left:228px;top:254.25px;color:#18d038;font-weight:bold">[M]</div><div class="row" style="top:277.90px">27/11/2019 12:00:31.17, ML=1.8</div><div class="ty" style="left:228px;top:277.90px;color:#18d038;font-weight:bold">[M]</div><div class="row" style="top:301.55px">27/11/2019 11:44:48.65, ML=1.1</div><div class="ty" style="left:228px;top:301.55px;color:#18d038;font-weight:bold">[M]</div><div class="row" style="top:325.20px">27/11/2019 11:14:23.97, ML=2.4</div><div class="ty" style="left:228px;top:325.20px;color:#18d038;font-weight:bold">[M]</div><div class="row" style="top:348.85px">27/11/2019 09:14:01.62, ML=1.3</div><div class="ty" style="left:228px;top:348.85px;color:#18d038;font-weight:bold">[M]</div><div class="row" style="top:372.50px">27/11/2019 09:05:48.03, ML=2.0</div><div class="ty" style="left:228px;top:372.50px;color:#18d038;font-weight:bold">[M]</div><div class="row" style="top:396.15px">27/11/2019 08:36:30.87, ML=1.8</div><div class="ty" style="left:228px;top:396.15px;color:#18d038;font-weight:bold">[M]</div><div class="row" style="top:419.80px">27/11/2019 08:25:49.16, ML=1.1</div><div class="ty" style="left:228px;top:419.80px;color:#18d038;font-weight:bold">[M]</div><div class="row" style="top:443.45px">27/11/2019 07:23:42.73, ML=6.1</div><div class="ty" style="left:228px;top:443.45px;color:#18d038;font-weight:bold">[M]</div><div class="row" style="top:467.10px">27/11/2019 06:28:18.91, ML=2.2</div><div class="ty" style="left:228px;top:467.10px;color:#18d038;font-weight:bold">[M]</div>
</div>
<div class="abs" style="left:1043px;top:116px;width:20px;height:484px;background:#f1f1f1"></div>
<div class="abs" style="left:1046px;top:137px;width:15px;height:130px;background:#c1c1c1"></div>
<svg class="abs" style="left:1043px;top:116px" width="20" height="20"><path d="M6,13.5 L14,13.5 L10,8.5 Z" fill="#a3a3a3"/></svg>
</body></html>
